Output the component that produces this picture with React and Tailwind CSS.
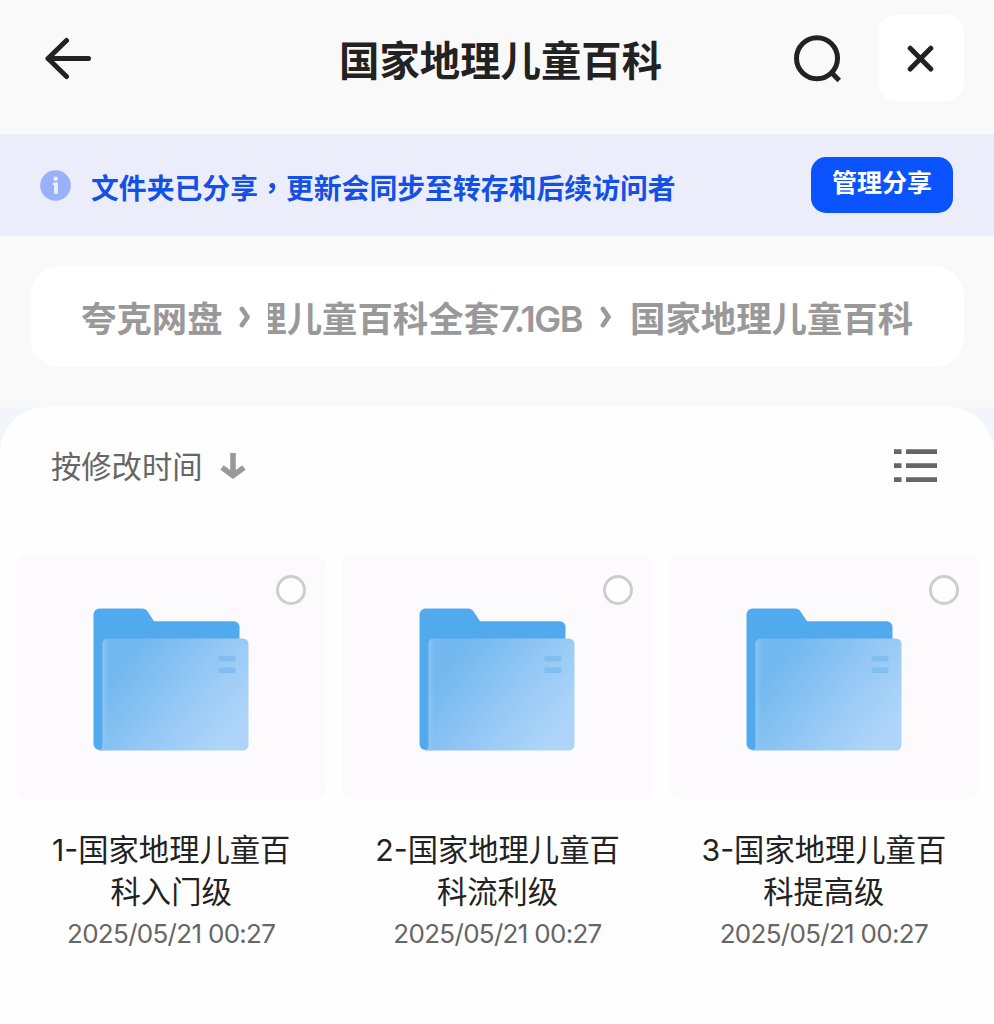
const files = [
  { id: 1, name: "1-国家地理儿童百科入门级", date: "2025/05/21 00:27" },
  { id: 2, name: "2-国家地理儿童百科流利级", date: "2025/05/21 00:27" },
  { id: 3, name: "3-国家地理儿童百科提高级", date: "2025/05/21 00:27" },
];

function FolderIcon() {
  return (
    <svg className="h-[143px] w-[156px]" viewBox="0 0 156 143" fill="none">
      <defs>
        <linearGradient id="folderFront" x1="30" y1="60" x2="128" y2="138" gradientUnits="userSpaceOnUse">
          <stop offset="0" stopColor="#73b9ef" />
          <stop offset="0.5" stopColor="#93c7f5" />
          <stop offset="1" stopColor="#aed5f9" />
        </linearGradient>
        <linearGradient id="folderEdge" x1="10" y1="0" x2="16" y2="0" gradientUnits="userSpaceOnUse">
          <stop offset="0" stopColor="#92c8f4" stopOpacity="0.7" />
          <stop offset="1" stopColor="#92c8f4" stopOpacity="0" />
        </linearGradient>
      </defs>
      <path
        d="M6.500 0.500H49c2.500 0 4 .8 5.400 2.800L61 13.300H141a5.500 5.500 0 0 1 5.500 5.500V70H17V135q0 7-6 7H6.500a6 6 0 0 1-6-6V6.500a6 6 0 0 1 6-6Z"
        fill="#51a9ee"
      />
      <path
        d="M14.500 30.500H150a5.500 5.500 0 0 1 5.500 5.500V137a5.500 5.500 0 0 1-5.500 5.500H6c2.500-.8 3.500-2.500 3.500-5.500V35.500a5 5 0 0 1 5-5Z"
        fill="url(#folderFront)"
      />
      <path d="M14.500 30.500H18V142.500H6c2.500-.8 3.500-2.500 3.500-5.500V35.500a5 5 0 0 1 5-5Z" fill="url(#folderEdge)" />
      <rect x="125.500" y="48" width="17" height="5.500" rx="1" fill="#82bff1" />
      <rect x="125.500" y="59.500" width="17" height="5.500" rx="1" fill="#82bff1" />
    </svg>
  );
}

function Chevron() {
  return (
    <svg className="h-6 w-3 shrink-0" viewBox="0 0 12 24" fill="none">
      <path d="M3 4L8.500 12L3 20" stroke="#999" strokeWidth="4.800" strokeLinecap="round" strokeLinejoin="round" />
    </svg>
  );
}

function Header() {
  return (
    <header className="flex h-[134px] items-start bg-[#f9f9f9]">
      <button className="mt-[37px] ml-[44px] h-11 w-12">
        <svg className="h-11 w-12" viewBox="0 0 48 44" fill="none">
          <path
            d="M22.500 3.500L4 21.500L22.500 39.500M4 21.500H44.500"
            stroke="#222"
            strokeWidth="5"
            strokeLinecap="round"
            strokeLinejoin="round"
          />
        </svg>
      </button>
      <h1 className="mt-[29px] ml-[247px] w-[330px] text-[40.400px] leading-[60px] font-bold whitespace-nowrap text-[#222]">
        国家地理儿童百科
      </h1>
      <button className="mt-[34px] ml-[123px] h-[50px] w-[52px]">
        <svg className="h-[50px] w-[52px]" viewBox="0 0 52 50" fill="none">
          <circle cx="25" cy="24.200" r="20.500" stroke="#222" strokeWidth="5" />
          <path d="M38.500 37.500L47.200 46.500" stroke="#222" strokeWidth="5" />
        </svg>
      </button>
      <button className="mt-[15px] ml-[34px] flex h-[86px] w-[86px] items-center justify-center rounded-[18px] bg-white">
        <svg className="h-7 w-7" viewBox="0 0 28 28" fill="none">
          <path d="M3.200 4.200L23.800 25M23.800 4.200L3.200 25" stroke="#222" strokeWidth="5" strokeLinecap="round" />
        </svg>
      </button>
    </header>
  );
}

function ShareBanner() {
  return (
    <div className="flex h-[102px] items-center bg-[#ebeefa] pr-[41px] pl-10">
      <svg className="h-[31px] w-[31px] shrink-0" viewBox="0 0 31 31">
        <circle cx="15.500" cy="15.500" r="15.300" fill="#98b1fa" />
        <circle cx="15.700" cy="8.700" r="2.300" fill="#ebeefa" />
        <path d="M12.800 12.500H18V23.700H14V15H12.800Z" fill="#ebeefa" />
      </svg>
      <p className="mt-[3px] ml-5 text-[27.850px] leading-10 font-bold whitespace-nowrap text-[#1550e6]">
        文件夹已分享<span className="font-['Noto_Sans_CJK_TC']">，</span>更新会同步至转存和后续访问者
      </p>
      <button className="ml-auto flex h-14 w-[142px] justify-center rounded-[15px] bg-[#0a53ff] pt-1 text-[25px] leading-10 font-bold text-white">
        管理分享
      </button>
    </div>
  );
}

function Breadcrumb() {
  return (
    <div className="h-[171px] bg-[#f9f9f9] px-[30px] pt-[30px]">
      <nav className="flex h-[101px] items-center rounded-[30px] bg-white pl-[51px] text-[35.400px] leading-[52px] font-bold whitespace-nowrap text-[#999]">
        <span className="w-[142px]">夸克网盘</span>
        <span className="ml-4">
          <Chevron />
        </span>
        {/* long folder names keep their tail visible */}
        <span className="ml-[17px] flex h-[52px] w-[314px] justify-end overflow-hidden">
          <span>
            理儿童百科全套
            <span className="font-['Inter'] text-[36px] leading-none font-semibold tracking-[-1.500px]">7.1GB</span>
          </span>
        </span>
        <span className="ml-[18px]">
          <Chevron />
        </span>
        <span className="ml-[18px]">国家地理儿童百科</span>
      </nav>
    </div>
  );
}

function Toolbar() {
  return (
    <div className="flex h-[118px] items-center pr-[57px] pl-[51px]">
      <span className="-mt-0.5 text-[30.300px] leading-[44px] text-[#666]">按修改时间</span>
      <svg className="ml-[17px] h-7 w-7" viewBox="0 0 28 28" fill="none">
        <path d="M14 1V22M3 15.500L14 23.500L25 15.500" stroke="#999" strokeWidth="5.500" />
      </svg>
      <svg className="ml-auto h-[34px] w-[43px]" viewBox="0 0 43 34" fill="#666">
        <path d="M0 .2h7.500v4.800H0zM12 .2h31v4.800H12zM0 14.200h7.500v4.800H0zM12 14.200h31v4.800H12zM0 28.200h7.500v4.800H0zM12 28.200h31v4.800H12z" />
      </svg>
    </div>
  );
}

function FileCard({ file }) {
  return (
    <div className="flex flex-col items-center">
      <div className="relative flex h-[244px] w-full justify-center rounded-[10px] bg-[#fcfafc] pt-[53px]">
        <FolderIcon />
        <span className="absolute top-5 right-5 h-[30px] w-[30px] rounded-full border-[3px] border-[#cdcdcf] bg-[#fefefe]" />
      </div>
      <p className="mt-[30px] w-[262px] text-center font-['Inter','Noto_Sans_CJK_SC',sans-serif] text-[30.300px] leading-[42px] break-all text-[#222]">
        {file.name}
      </p>
      <p className="mt-[3px] font-['Inter'] text-[26px] leading-9 tracking-[-0.700px] whitespace-nowrap text-[#666]">
        {file.date}
      </p>
    </div>
  );
}

export default function App() {
  return (
    <div className="flex h-[1024px] w-[994px] flex-col overflow-hidden bg-[#f3f5fb] font-['Noto_Sans_CJK_SC',sans-serif]">
      <Header />
      <ShareBanner />
      <Breadcrumb />
      <main className="flex-1 rounded-t-[46px] bg-[#fefefe]">
        <Toolbar />
        <div className="mt-[30px] grid grid-cols-3 gap-4 pr-[15px] pl-4">
          {files.map((file) => (
            <FileCard key={file.id} file={file} />
          ))}
        </div>
      </main>
    </div>
  );
}
